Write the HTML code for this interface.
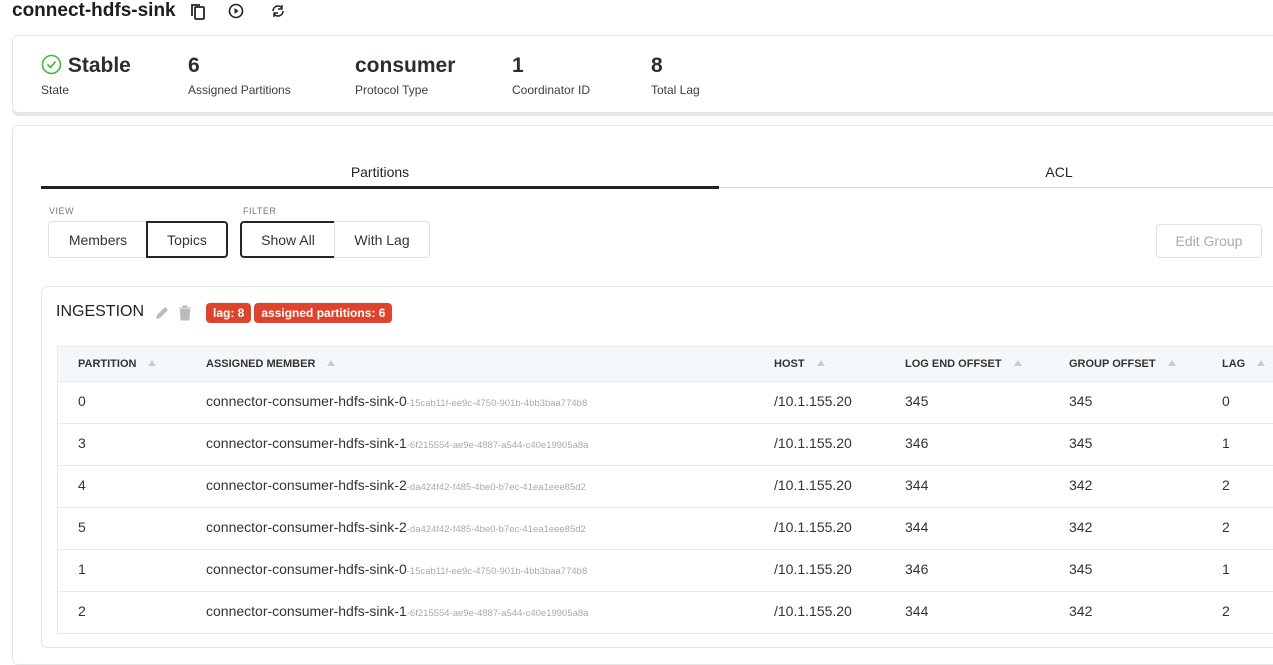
<!DOCTYPE html>
<html><head><style>
*{box-sizing:border-box;margin:0;padding:0}
body{width:1273px;height:649px;overflow:hidden;background:#fff;font-family:"Liberation Sans",sans-serif;color:#1f2328;position:relative}
.abs{position:absolute}
.title{left:12px;top:0;font-size:19px;font-weight:bold;color:#1a1d21}
.card{border:1px solid #e3e5e8;border-radius:6px;background:#fff}
.stat .v{font-size:21px;font-weight:bold;color:#2a2e33}
.stat .l{font-size:12px;color:#3a3f45;margin-top:5px}
.btn{position:absolute;height:37px;border:1px solid #dcdfe3;font-size:14px;display:flex;align-items:center;justify-content:center;color:#333;background:#fff}
.sel{border:2px solid #23272b}
.small{font-size:9px;color:#777;letter-spacing:.5px}
.badge{background:#e0432b;color:#fff;font-size:12px;font-weight:bold;border-radius:4px;height:20px;padding:0 7px;display:flex;align-items:center}
table{border-collapse:collapse;position:absolute;left:57px;top:346px;width:1230px;font-size:14px}
th{height:35px;background:#f5f8fb;font-size:11px;font-weight:bold;text-align:left;color:#333;border-top:1px solid #e8ecef}
td{height:42px;border-top:1px solid #e8ecef;color:#333;padding-bottom:3px}
th:first-child,td:first-child{padding-left:21px}
.h{font-size:9.5px;color:#aaa}
.tri{display:inline-block;width:0;height:0;border-left:4px solid transparent;border-right:4px solid transparent;border-bottom:6px solid #c8cbcf;margin-left:12px;vertical-align:1px}
</style></head><body>
<div class="abs title">connect-hdfs-sink</div>
<svg class="abs" style="left:190px;top:3px" width="16" height="18" viewBox="0 0 16 18"><rect x="5" y="4" width="9" height="12" rx="1" fill="none" stroke="#222" stroke-width="1.8"/><path d="M2 13V2h8" fill="none" stroke="#222" stroke-width="1.8"/></svg>
<svg class="abs" style="left:228px;top:3px" width="16" height="16"><circle cx="8" cy="8" r="6.5" fill="none" stroke="#222" stroke-width="1.6"/><path d="M6.5 5l4 3-4 3z" fill="#222"/></svg>
<svg class="abs" style="left:270px;top:3px" width="16" height="16"><path d="M3 8a5 5 0 0 1 9-3M13 8a5 5 0 0 1-9 3" fill="none" stroke="#222" stroke-width="1.6"/><path d="M12 2v4h-4M4 14v-4h4" fill="none" stroke="#222" stroke-width="1.4"/></svg>

<div class="abs card" style="left:12px;top:35px;width:1275px;height:78px;box-shadow:0 3px 0 #e6e8eb"></div>
<div class="abs stat" style="left:41px;top:54px"><div class="v"><svg width="21" height="21" style="vertical-align:-3px"><circle cx="10.5" cy="10.5" r="9" fill="none" stroke="#3fb83f" stroke-width="1.6"/><path d="M6.5 10.5l3 3 5-6" fill="none" stroke="#3fb83f" stroke-width="1.6"/></svg> Stable</div><div class="l">State</div></div>
<div class="abs stat" style="left:188px;top:54px"><div class="v">6</div><div class="l">Assigned Partitions</div></div>
<div class="abs stat" style="left:355px;top:54px"><div class="v">consumer</div><div class="l">Protocol Type</div></div>
<div class="abs stat" style="left:512px;top:54px"><div class="v">1</div><div class="l">Coordinator ID</div></div>
<div class="abs stat" style="left:651px;top:54px"><div class="v">8</div><div class="l">Total Lag</div></div>

<div class="abs card" style="left:12px;top:125px;width:1275px;height:540px"></div>
<div class="abs" style="left:41px;top:164px;width:678px;text-align:center;font-size:14px">Partitions</div>
<div class="abs" style="left:719px;top:164px;width:680px;text-align:center;font-size:14px">ACL</div>
<div class="abs" style="left:41px;top:186px;width:678px;height:3px;background:#1f2328"></div>
<div class="abs" style="left:719px;top:187px;width:560px;height:1px;background:#d6d9dd"></div>

<div class="abs small" style="left:49px;top:206px">VIEW</div>
<div class="abs small" style="left:243px;top:206px">FILTER</div>
<div class="btn" style="left:48px;top:221px;width:100px;border-radius:4px 0 0 4px">Members</div>
<div class="btn sel" style="left:146px;top:221px;width:82px;border-radius:0 4px 4px 0">Topics</div>
<div class="btn sel" style="left:240px;top:221px;width:96px;border-radius:4px 0 0 4px">Show All</div>
<div class="btn" style="left:334px;top:221px;width:96px;border-radius:0 4px 4px 0">With Lag</div>
<div class="btn" style="left:1156px;top:224px;width:106px;height:34px;border-radius:4px;color:#aaa;font-size:14px">Edit Group</div>

<div class="abs card" style="left:41px;top:286px;width:1250px;height:362px"></div>
<div class="abs" style="left:56px;top:303px;font-size:16px;color:#222">INGESTION</div>
<svg class="abs" style="left:154px;top:305px" width="16" height="16"><path d="M2 14l1-4 8-8 3 3-8 8z" fill="#bbb"/></svg>
<svg class="abs" style="left:178px;top:305px" width="14" height="16"><path d="M1 3h12M5 3V1h4v2M2.5 4.5h9L11 15H3z" fill="#bbb" stroke="#bbb"/></svg>
<div class="abs" style="left:206px;top:303px;display:flex;gap:3px"><div class="badge">lag: 8</div><div class="badge">assigned partitions: 6</div></div>

<table>
<tr><th style="width:149px">PARTITION<span class="tri"></span></th><th style="width:568px">ASSIGNED MEMBER<span class="tri"></span></th><th style="width:131px">HOST<span class="tri"></span></th><th style="width:164px">LOG END OFFSET<span class="tri"></span></th><th style="width:153px">GROUP OFFSET<span class="tri"></span></th><th>LAG<span class="tri"></span></th></tr>
<tr><td>0</td><td>connector-consumer-hdfs-sink-0<span class="h">-15cab11f-ee9c-4750-901b-4bb3baa774b8</span></td><td>/10.1.155.20</td><td>345</td><td>345</td><td>0</td></tr>
<tr><td>3</td><td>connector-consumer-hdfs-sink-1<span class="h">-6f215554-ae9e-4887-a544-c40e19905a8a</span></td><td>/10.1.155.20</td><td>346</td><td>345</td><td>1</td></tr>
<tr><td>4</td><td>connector-consumer-hdfs-sink-2<span class="h">-da424f42-f485-4be0-b7ec-41ea1eee85d2</span></td><td>/10.1.155.20</td><td>344</td><td>342</td><td>2</td></tr>
<tr><td>5</td><td>connector-consumer-hdfs-sink-2<span class="h">-da424f42-f485-4be0-b7ec-41ea1eee85d2</span></td><td>/10.1.155.20</td><td>344</td><td>342</td><td>2</td></tr>
<tr><td>1</td><td>connector-consumer-hdfs-sink-0<span class="h">-15cab11f-ee9c-4750-901b-4bb3baa774b8</span></td><td>/10.1.155.20</td><td>346</td><td>345</td><td>1</td></tr>
<tr><td>2</td><td>connector-consumer-hdfs-sink-1<span class="h">-6f215554-ae9e-4887-a544-c40e19905a8a</span></td><td>/10.1.155.20</td><td>344</td><td>342</td><td>2</td></tr>
</table>
<div class="abs" style="left:57px;top:633px;width:1230px;height:1px;background:#e8ecef"></div>
<div class="abs" style="left:57px;top:346px;width:1px;height:288px;background:#e8ecef"></div>
</body></html>
